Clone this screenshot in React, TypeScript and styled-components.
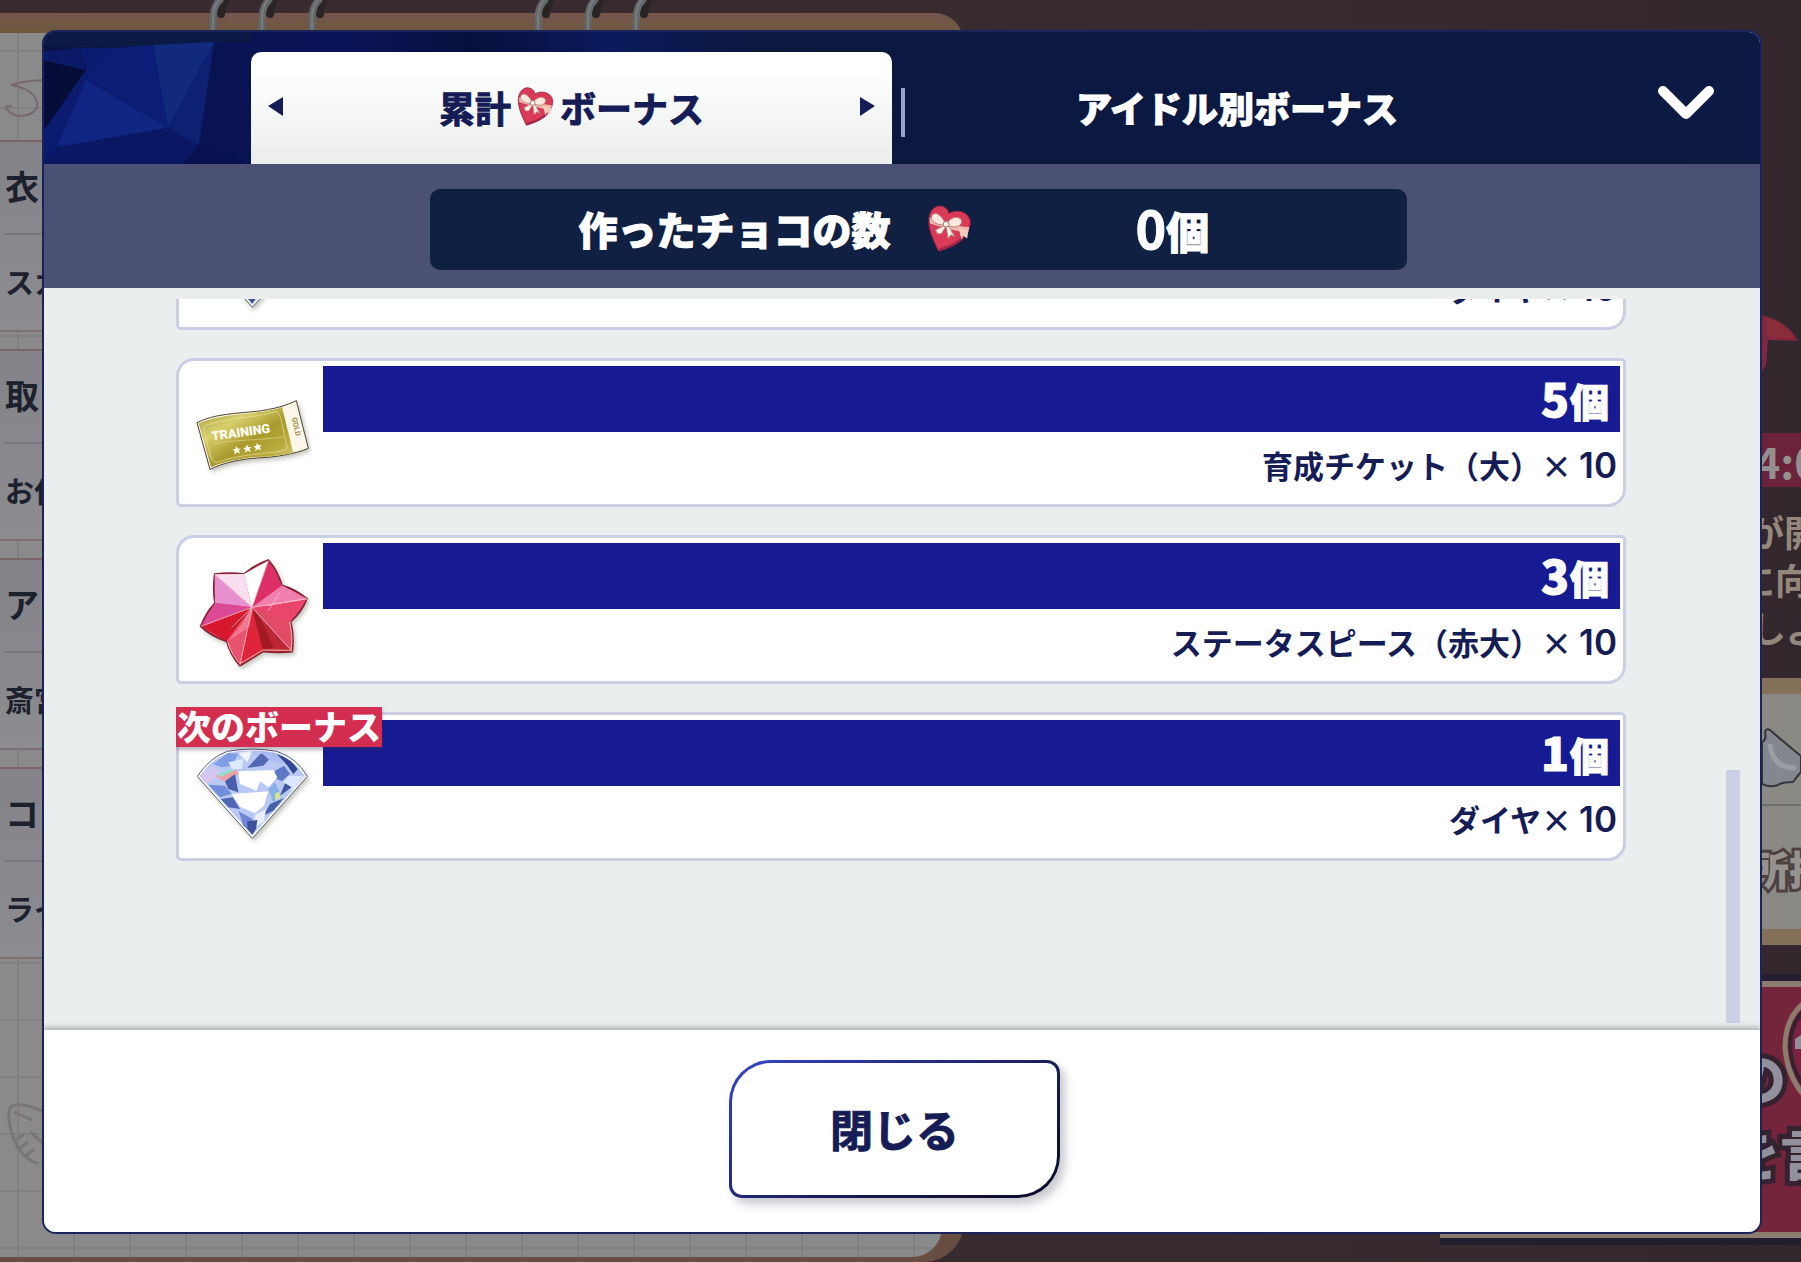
import React, { useState } from "react";
import styled, { createGlobalStyle } from "styled-components";

const GlobalStyle = createGlobalStyle`
  * { box-sizing: border-box; }
  body {
    margin: 0;
    background: #382b30;
    font-family: "Noto Sans CJK JP", "Noto Sans", sans-serif;
    font-weight: 700;
    overflow: hidden;
  }
  button { font: inherit; color: inherit; border: 0; padding: 0; background: none; cursor: pointer; }
  svg { display: block; }
`;

/* ---------- dimmed home screen behind the dialog ---------- */

const Screen = styled.main`
  position: relative;
  min-height: 100vh;
  display: flex;
  padding: 30px 39px 28px 42px;
`;

const Backdrop = styled.div`
  position: absolute;
  inset: 0;
  overflow: hidden;
  background: linear-gradient(90deg, #392b30, #382b30 70%, #33272e);
`;

const Notebook = styled.div`
  position: absolute;
  top: 13px;
  left: -20px;
  bottom: 0;
  width: 984px;
  padding: 20px 22px 5px 0;
  border-radius: 0 30px 40px 0;
  background: linear-gradient(#75554d, #6d583f 20px, #674d42 60px);
`;

const Paper = styled.div`
  height: 100%;
  padding: 107px 0 0 20px;
  border-radius: 0 0 30px 0;
  background-color: #8a8a8a;
  background-image: linear-gradient(90deg, #808081 2px, transparent 2px),
    linear-gradient(#808081 2px, transparent 2px);
  background-size: 56px 57px;
  background-position: 37px 17px;
`;

const MemoBox = styled.div`
  height: 192px;
  margin-bottom: 17px;
  padding-left: 5px;
  border-top: 2px solid #7d6468;
  border-bottom: 2px solid #7d6e70;
  background: linear-gradient(#838389, #8b8b90);
  color: #1d212d;
`;

const MemoTitle = styled.div`
  height: 93px;
  font-size: 34px;
  line-height: 88px;
  border-bottom: 2px solid #77777b;
`;

const MemoText = styled.div`
  font-size: 29px;
  line-height: 92px;
`;

const Rings = styled.svg`
  position: absolute;
  top: 0;
  left: 198px;
`;

const Doodle = styled.svg<{ $top: number }>`
  position: absolute;
  left: 0;
  top: ${(p) => p.$top}px;
`;

const EventColumn = styled.div`
  position: absolute;
  top: 0;
  right: 0;
  width: 361px;
  padding: 315px 0 20px;
  overflow: hidden;
  white-space: nowrap;
`;

const Ribbon = styled.svg`
  margin-left: 317px;
`;

const TimeChip = styled.div`
  height: 54px;
  margin-top: 53px;
  padding-left: 315px;
  background: #6a2339;
  color: #958f90;
  font-size: 43px;
  line-height: 54px;
`;

const Notice = styled.div`
  height: 191px;
  padding-top: 20px;
  color: #93887b;
  font-size: 36px;
  line-height: 48px;
`;

const NoticeLine = styled.div<{ $start: number }>`
  padding-left: ${(p) => p.$start}px;
`;

const ItemPanel = styled.div`
  height: 267px;
  border: solid #85715a;
  border-width: 16px 0;
  background: #8b8984;
`;

const ItemPicture = styled.div`
  height: 112px;
  padding: 34px 0 0 322px;
  border-bottom: 2px solid #6e6d70;
`;

const ItemLabel = styled.div`
  padding-left: 309px;
  font-size: 40px;
  font-weight: 900;
  line-height: 124px;
  color: #96938f;
  -webkit-text-stroke: 6px #4c4140;
  paint-order: stroke fill;
`;

const Banner = styled.div`
  position: relative;
  height: 257px;
  margin-top: 36px;
  padding-top: 52px;
  border: solid #8c7c6e;
  border-width: 6px 0;
  background: #74243b;
  box-shadow: 0 0 0 7px #231e2f;
`;

const BannerLine = styled.div<{ $start: number }>`
  padding-left: ${(p) => p.$start}px;
  font-size: 54px;
  font-weight: 900;
  line-height: 76px;
  color: #92909c;
  -webkit-text-stroke: 10px #35222f;
  paint-order: stroke fill;
`;

const BannerHeart = styled.svg`
  position: absolute;
  top: 10px;
  right: 0;
`;

/* ---------- dialog ---------- */

const Dialog = styled.section`
  position: relative;
  flex: 1;
  min-width: 0;
  height: calc(100vh - 58px);
  display: flex;
  flex-direction: column;
  border: 2px solid #1a235c;
  border-radius: 14px;
  overflow: hidden;
  background: #eaeeee;
  color: #161c56;
`;

const Header = styled.header`
  position: relative;
  display: grid;
  grid-template-columns: 207px minmax(0, 641fr) 22px minmax(0, 646fr) 200px;
  align-items: end;
  height: 132px;
  background: linear-gradient(90deg, #08124c, #091457 18%, #07103c 25%, #0a1a5c 33%, #0b1840 41%, #0b1943);
`;

const Crystal = styled.svg`
  align-self: stretch;
`;

const TabButton = styled.button<{ $active: boolean }>`
  height: 112px;
  display: flex;
  align-items: center;
  justify-content: space-between;
  padding: 0 17px 3px;
  border-radius: 10px 10px 0 0;
  font-size: 36px;
  line-height: 48px;
  font-weight: ${(p) => (p.$active ? 700 : 900)};
  color: ${(p) => (p.$active ? "#161c56" : "#fff")};
  background: ${(p) => (p.$active ? "linear-gradient(#fff 15%, #edefef 90%)" : "none")};
`;

const TabText = styled.span`
  flex: 1;
  display: flex;
  align-items: center;
  justify-content: center;
  gap: 5px;
  white-space: nowrap;
  -webkit-text-stroke: 1px currentColor;
`;

const Separator = styled.span`
  width: 4px;
  height: 49px;
  margin: 0 0 27px 9px;
  background: #96a2cc;
`;

const CollapseButton = styled.button`
  justify-self: end;
  align-self: center;
  margin: 10px 46px 0 0;
`;

const CountBand = styled.div`
  display: flex;
  justify-content: center;
  padding: 25px 0 18px 33px;
  background: #4b5075;
`;

const CountPill = styled.div`
  width: 58%;
  height: 81px;
  display: flex;
  align-items: center;
  padding: 0 0 3px 148px;
  border-radius: 10px;
  background: #102043;
  color: #fff;
  font-size: 39px;
  line-height: 56px;
  font-weight: 900;
  white-space: nowrap;
  -webkit-text-stroke: 1px currentColor;
`;

const CountLabel = styled.span`
  margin-right: 36px;
`;

const CountValue = styled.output`
  margin-left: 162px;
  font-size: 43px;
`;

const BigDigits = styled.span`
  font-size: 52px;
  font-weight: 700;
`;

const ListArea = styled.div`
  flex: 1;
  min-height: 0;
  display: flex;
  padding: 11px 20px 7px 132px;
  background: #eaeeee;
`;

const BonusList = styled.ul`
  flex: 1;
  min-width: 0;
  margin: 0 100px 0 0;
  padding: 0 0 162px;
  list-style: none;
  display: flex;
  flex-direction: column;
  justify-content: flex-end;
  gap: 28px;
  overflow: hidden;
`;

const ScrollTrack = styled.div`
  width: 14px;
  display: flex;
  flex-direction: column;
  justify-content: flex-end;
`;

const ScrollThumb = styled.div`
  height: 35%;
  background: #ccd0e5;
`;

const Card = styled.li`
  position: relative;
  flex: none;
  display: grid;
  grid-template-columns: 144px minmax(0, 1fr);
  height: 149px;
  border: 3px solid #cccfe4;
  border-radius: 18px 5px 18px 5px;
  background: #fff;
`;

const CardIcon = styled.svg`
  place-self: center;
`;

const CardBody = styled.div`
  padding: 5px 3px 0 0;
  text-align: right;
`;

const Goal = styled.div`
  height: 66px;
  padding-right: 11px;
  background: #171b93;
  color: #fff;
  font-size: 39px;
  font-weight: 900;
  line-height: 62px;
  -webkit-text-stroke: 1px currentColor;
`;

const GoalDigits = styled.span`
  margin-right: 1px;
  font-size: 46px;
`;

const Reward = styled.div`
  padding-right: 3px;
  font-size: 31px;
  line-height: 66px;
`;

const RewardDigits = styled.span`
  margin-left: 7px;
  font-family: Inter, "Noto Sans", sans-serif;
  font-size: 35px;
  font-weight: 600;
`;

const NextBadge = styled.strong`
  position: absolute;
  top: -8px;
  left: -3px;
  height: 40px;
  padding: 0 1px;
  background: #d32e50;
  color: #fff;
  font-size: 34px;
  line-height: 38px;
  box-shadow: 0 3px 4px rgba(60, 50, 90, 0.35);
`;

const Footer = styled.footer`
  position: relative;
  display: flex;
  justify-content: center;
  padding: 30px 15px 34px 0;
  background: #fff;
  box-shadow: 0 -1px 6px 1px rgba(60, 60, 60, 0.4);
`;

const CloseButton = styled.button`
  width: 331px;
  height: 138px;
  padding: 3px;
  border-radius: 42px 13px 42px 13px;
  background: linear-gradient(150deg, #3a47c4, #26308a 30%, #171a4c 65%, #0a0b26);
  box-shadow: 5px 6px 10px rgba(40, 40, 60, 0.25);
`;

const CloseFace = styled.span`
  display: flex;
  height: 100%;
  align-items: center;
  justify-content: center;
  padding-bottom: 2px;
  border-radius: 39px 10px 39px 10px;
  background: #fff;
  color: #161c56;
  font-size: 43px;
  line-height: 60px;
  -webkit-text-stroke: 1px currentColor;
`;

const ChocoHeart = ({ size }: { size: number }) => (
  <svg width={size} height={size} viewBox="-1 -1 47 49" aria-hidden="true">
    <path d="M11 47C6 36 0 25 1 13C2 4 8 0 12 0C17 0 21 3 22 8C26 5 31 5 35 6C41 8 45 13 44 19C43 32 28 42 11 47Z" fill="#d93a58" stroke="#8f2540" strokeWidth="1" />
    <path d="M12 44C28 40 41 31 43 19C44 33 29 43 11 47Z" fill="#a52445" />
    <path d="M2 12C15 18 30 21 43 22L42 28C28 26 13 22 2 18Z" fill="#f0b9ac" />
    <path d="M18 18C14 9 8 6 5 9C1 13 6 20 18 20Z" fill="#fde9e0" stroke="#b98078" strokeWidth="1" />
    <path d="M20 18C24 11 33 10 35 15C36 21 29 24 20 20Z" fill="#fde9e0" stroke="#b98078" strokeWidth="1" />
    <path d="M18 20L8 25L10 29L14 29L19 21L21 34L24 30L28 32L21 20Z" fill="#fff2ea" stroke="#b98078" strokeWidth="1" />
    <path d="M32 23L42 26L41 34L37 31L35 35Z" fill="#f7cdc0" />
    <circle cx="19" cy="19" r="3" fill="#fff4ee" stroke="#a86a64" strokeWidth="1" />
  </svg>
);

const Ticket = () => (
  <CardIcon width="120" height="120" viewBox="0 0 360 360" aria-hidden="true">
    <defs>
      <linearGradient id="gold" x1="0" y1="0" x2="1" y2="1">
        <stop offset="0" stopColor="#a8983c" />
        <stop offset="0.3" stopColor="#d8cf6c" />
        <stop offset="0.55" stopColor="#a99a2e" />
        <stop offset="0.75" stopColor="#b9aa3c" />
        <stop offset="1" stopColor="#ded58c" />
      </linearGradient>
      <filter id="soft" x="-20%" y="-20%" width="150%" height="150%">
        <feDropShadow dx="6" dy="8" stdDeviation="6" floodColor="#554" floodOpacity="0.35" />
      </filter>
    </defs>
    <g transform="translate(-93 -37)">
      <path d="M111 186C160 160 230 158 290 152C340 146 380 134 409 120L445 263C400 282 340 290 290 292C240 296 190 306 150 326Z" fill="#fbf6ea" stroke="#4d4632" strokeWidth="3" filter="url(#soft)" />
      <path d="M116 188C170 163 240 162 290 155C320 152 345 147 366 139L400 277C360 286 320 288 290 289C240 293 190 303 153 320Z" fill="url(#gold)" />
      <path d="M135 195C200 170 290 172 350 152Q358 160 362 172L382 262Q376 270 362 272C290 280 220 286 168 306Q154 300 152 286L132 212Q128 200 135 195Z" fill="none" stroke="#e9e3a4" strokeWidth="2" />
      <path d="M160 250C220 236 300 240 372 228" fill="none" stroke="#e0d890" strokeWidth="2" />
      <text x="157" y="240" fontFamily="Roboto" fontWeight="900" fontSize="38" fill="#fffdf0" transform="rotate(-8 157 240)">TRAINING</text>
      {[230, 262, 293].map((x, i) => (
        <path key={x} transform={`translate(${x} ${269 - i * 5}) rotate(-8)`} d="M0-13L4-4L13-4L6 2L9 11L0 6L-9 11L-6 2L-13-4L-4-4Z" fill="#fffdf0" />
      ))}
      <text x="395" y="172" fontFamily="Roboto" fontWeight="700" fontSize="22" fill="#a08f45" transform="rotate(77 395 172)">GOLD</text>
    </g>
  </CardIcon>
);

const StarPiece = () => (
  <CardIcon width="120" height="120" viewBox="0 0 360 360" aria-hidden="true">
    <g transform="translate(-93 -568)">
      <path d="M325 598Q352 628 366 674Q405 685 441 714Q425 755 392 783Q403 825 397 873Q350 878 310 872Q275 895 240 915Q212 885 200 842Q155 828 122 797Q138 755 165 727Q158 685 164 640Q210 634 252 640Q285 612 325 598Z" fill="#e2415f" stroke="#7c2336" strokeWidth="5" filter="url(#soft)" />
      <path d="M164 641L252 640L276 740Z" fill="#f8dff0" />
      <path d="M252 640L325 600L276 740Z" fill="#fff" />
      <path d="M164 641L276 740L165 727Z" fill="#e690cf" />
      <path d="M165 727L276 740L123 797Z" fill="#dc4a95" />
      <path d="M123 797L276 740L200 842Z" fill="#d8182c" />
      <path d="M200 842L276 740L240 913Z" fill="#e8536f" />
      <path d="M240 913L276 740L310 872Z" fill="#dd2438" />
      <path d="M276 740L310 872L340 860L310 790Z" fill="#7e1220" />
      <path d="M276 740L397 873L310 872Z" fill="#b01d25" opacity=".75" />
      <path d="M276 740L392 783L397 873Z" fill="#e14b66" />
      <path d="M276 740L441 714L392 783Z" fill="#e9456d" />
      <path d="M276 740L366 674L441 714Z" fill="#f07fae" />
      <path d="M325 600L366 674L276 740Z" fill="#dc2f68" />
      <path d="M123 797L276 740M240 913L276 740M276 740L397 873M276 740L441 714M276 740L325 600M164 641L276 740M325 750L360 695M215 800L276 740L250 790M320 735L441 714" stroke="#fbc3d0" strokeWidth="3" fill="none" opacity=".8" />
      <path d="M205 840L262 770L280 742L268 800Z" fill="#ff9cac" opacity=".5" />
      <path d="M204 846Q216 885 240 909L309 868L393 869Q400 825 388 783" fill="none" stroke="#ffb8a8" strokeWidth="3" />
    </g>
  </CardIcon>
);

const Diamond = () => (
  <CardIcon width="120" height="120" viewBox="0 0 360 360" aria-hidden="true">
    <g transform="translate(-93 -1099)">
      <path d="M112 1247Q150 1190 202 1172Q277 1158 350 1172Q408 1190 442 1247L277 1433Z" fill="#fff" stroke="#56607e" strokeWidth="3" filter="url(#soft)" />
      <path d="M119 1247Q155 1194 204 1177Q277 1164 348 1177Q402 1194 435 1247L277 1424Z" fill="#b9c9f4" />
      <path d="M119 1247L158 1215L190 1240L160 1258L140 1268Z" fill="#d6c6f2" />
      <path d="M160 1210L204 1177L235 1180L215 1215L185 1220Z" fill="#7e9de6" />
      <path d="M235 1176L277 1170L262 1205Z" fill="#f2f6ff" />
      <path d="M262 1222L300 1180L345 1178L310 1215Z" fill="#5269b4" />
      <path d="M300 1172L350 1180L372 1210L330 1200Z" fill="#a9bdf2" />
      <path d="M350 1180Q395 1195 413 1226L400 1240L380 1212Z" fill="#33479a" />
      <path d="M345 1230L372 1215L390 1240L365 1262L340 1250Z" fill="#5f78c8" />
      <path d="M385 1245L433 1247L395 1290L370 1265Z" fill="#dbe6ff" />
      <path d="M165 1245L225 1228L240 1238L190 1262Z" fill="#ef9fa6" />
      <path d="M175 1238L215 1226L222 1231L178 1250Z" fill="#8fe0cf" />
      <path d="M195 1262L225 1240L235 1295L205 1285Z" fill="#475da9" />
      <path d="M145 1272L195 1275L215 1300L180 1310Z" fill="#718ddc" />
      <path d="M235 1232L340 1228L352 1250L325 1280L300 1262L290 1290L240 1270Z" fill="#fff" />
      <path d="M215 1300L325 1292L312 1335L285 1358L240 1338Z" fill="#fff" />
      <path d="M182 1315L218 1310L240 1345L205 1340Z" fill="#5066b4" />
      <path d="M325 1285L345 1265L362 1300L340 1325Z" fill="#86b0e6" />
      <path d="M345 1300L358 1292L360 1312L346 1318Z" fill="#d6e88a" />
      <path d="M330 1330L372 1312L340 1350L310 1365Z" fill="#4960ae" />
      <path d="M236 1352L278 1375L270 1412L250 1395Z" fill="#6f87d2" />
      <path d="M285 1362L318 1345L312 1382L280 1405Z" fill="#e9efff" />
      <path d="M262 1382L292 1378L288 1405L277 1422L262 1405Z" fill="#3c509e" />
      <path d="M375 1268L395 1280L360 1305Z" fill="#3f56a5" />
      <path d="M205 1205L250 1195L245 1225L215 1225Z" fill="#dfe9ff" />
    </g>
  </CardIcon>
);

const CrystalArt = () => (
  <Crystal width="207" height="132" viewBox="2 2 207 132" preserveAspectRatio="xMinYMin slice" aria-hidden="true">
    <rect width="60" height="134" fill="#0a1346" />
    <path d="M0 0H210V12L172 12L73 18L0 16Z" fill="#0b1a44" />
    <path d="M0 22L38 18L44 44L0 30Z" fill="#0a1a68" />
    <path d="M44 40L0 103V30Z" fill="#050d38" />
    <path d="M38 18L73 18L172 12L157 115L142 134H0V103L44 40Z" fill="#0b1b70" />
    <path d="M44 50L126 98L15 117Z" fill="#102581" />
    <path d="M111 15L172 12L126 98Z" fill="#122a7c" />
    <path d="M172 12L157 115L126 98Z" fill="#0d2072" />
    <path d="M73 18L111 15L126 98L44 46Z" fill="#0c1d78" />
    <path d="M15 117L126 98L157 115L142 134H0Z" fill="#0a1762" />
    <path d="M157 115L210 134H142Z" fill="#081052" />
  </Crystal>
);

const RingArt = () => (
  <Rings width="460" height="31" aria-hidden="true">
    {[15, 64, 114, 340, 390, 438].map((x) => (
      <g key={x} fill="none" strokeLinecap="round">
        <path d={`M${x + 8} 14Q${x + 10} 2 ${x + 12} 0`} stroke="#2a2424" strokeWidth="8" />
        <path d={`M${x} 36V20Q${x} 6 ${x + 7} 0`} stroke="#63676a" strokeWidth="7" />
        <path d={`M${x} 36V20Q${x} 6 ${x + 6} 0`} stroke="#787c7d" strokeWidth="2" />
      </g>
    ))}
  </Rings>
);

const memos = [
  ["衣", "スカ"],
  ["取", "お仕"],
  ["ア", "斎宮"],
  ["コ", "ライ"],
];

const bonuses = [
  { goal: 7, reward: "ダイヤ", Icon: Diamond },
  { goal: 5, reward: "育成チケット（大）", Icon: Ticket },
  { goal: 3, reward: "ステータスピース（赤大）", Icon: StarPiece },
  { goal: 1, reward: "ダイヤ", Icon: Diamond, next: true },
];

export default function App() {
  const [tab, setTab] = useState(0);
  return (
    <Screen>
      <GlobalStyle />
      <Backdrop aria-hidden="true">
        <Notebook>
          <Paper>
            {memos.map(([title, text]) => (
              <MemoBox key={title}>
                <MemoTitle>{title}</MemoTitle>
                <MemoText>{text}</MemoText>
              </MemoBox>
            ))}
          </Paper>
        </Notebook>
        <RingArt />
        <Doodle $top={78} width="44" height="44" fill="none" stroke="#77696b" strokeWidth="2">
          <path d="M44 2Q22 3 11 7Q26 9 34 18Q42 30 30 36Q14 42 6 30Q4 28 12 28" />
        </Doodle>
        <Doodle $top={1100} width="44" height="68" fill="none" stroke="#7a7676" strokeWidth="3">
          <path d="M44 12Q22 2 12 6Q6 10 11 30Q17 56 38 64M14 12L32 20M16 40L24 34M20 48L28 42M26 56L34 49M30 32L44 44" />
        </Doodle>
        <EventColumn>
          <Ribbon width="47" height="65">
            <path d="M0 0Q28 2 41 26L11 25L9 50L0 64Z" fill="#7d2740" />
            <path d="M8 2Q30 8 39 24L10 22Z" fill="#8a2c3a" />
          </Ribbon>
          <TimeChip>4:0</TimeChip>
          <Notice>
            <NoticeLine $start={308}>が開</NoticeLine>
            <NoticeLine $start={299}>に向</NoticeLine>
            <NoticeLine $start={310}>しよ</NoticeLine>
          </Notice>
          <ItemPanel>
            <ItemPicture>
              <svg width="39" height="62" viewBox="0 0 39 62">
                <path d="M0 14Q5 12 3 4Q4 0 8 2Q24 16 39 28V44Q34 50 31 54Q20 54 16 57Q8 60 0 56Z" fill="#84878e" stroke="#35363c" strokeWidth="2" />
                <path d="M8 16Q10 40 34 40" stroke="#9a9da2" strokeWidth="5" fill="none" />
              </svg>
            </ItemPicture>
            <ItemLabel>所持</ItemLabel>
          </ItemPanel>
          <Banner>
            <BannerLine $start={292}>の</BannerLine>
            <BannerLine $start={286}>を言</BannerLine>
            <BannerHeart width="20" height="108" viewBox="0 0 20 108">
              <path d="M28 2Q4 18 4 50Q6 82 28 104Z" fill="#8c2440" stroke="#8c7c6e" strokeWidth="5" />
              <path d="M30 8Q9 22 9 50Q11 78 30 98Z" fill="#7a2040" stroke="#35222f" strokeWidth="4" />
              <path d="M14 42L20 38V52H14Z" fill="#92909c" />
            </BannerHeart>
          </Banner>
        </EventColumn>
      </Backdrop>

      <Dialog role="dialog" aria-label="ボーナス">
        <Header>
          <CrystalArt />
          <TabButton $active={tab === 0} onClick={() => setTab(0)} aria-pressed={tab === 0}>
            <svg width="15" height="19" aria-hidden="true"><path d="M15 0V19L0 9Z" fill="#161c56" /></svg>
            <TabText>累計<ChocoHeart size={39} />ボーナス</TabText>
            <svg width="15" height="19" aria-hidden="true"><path d="M0 0V19L15 9Z" fill="#161c56" /></svg>
          </TabButton>
          <Separator />
          <TabButton $active={tab === 1} onClick={() => setTab(1)} aria-pressed={tab === 1}>
            <TabText>アイドル別ボーナス</TabText>
          </TabButton>
          <CollapseButton aria-label="たたむ">
            <svg width="56" height="34" viewBox="0 0 56 34"><path d="M5 5L28 28L51 5" fill="none" stroke="#fff" strokeWidth="10" strokeLinecap="round" strokeLinejoin="round" /></svg>
          </CollapseButton>
        </Header>

        <CountBand>
          <CountPill>
            <CountLabel>作ったチョコの数</CountLabel>
            <ChocoHeart size={47} />
            <CountValue><BigDigits>0</BigDigits>個</CountValue>
          </CountPill>
        </CountBand>

        <ListArea>
          <BonusList>
            {bonuses.map(({ goal, reward, Icon, next }) => (
              <Card key={goal}>
                <Icon />
                <CardBody>
                  <Goal><GoalDigits>{goal}</GoalDigits>個</Goal>
                  <Reward>{reward}×<RewardDigits>10</RewardDigits></Reward>
                </CardBody>
                {next && <NextBadge>次のボーナス</NextBadge>}
              </Card>
            ))}
          </BonusList>
          <ScrollTrack><ScrollThumb /></ScrollTrack>
        </ListArea>

        <Footer>
          <CloseButton><CloseFace>閉じる</CloseFace></CloseButton>
        </Footer>
      </Dialog>
    </Screen>
  );
}
